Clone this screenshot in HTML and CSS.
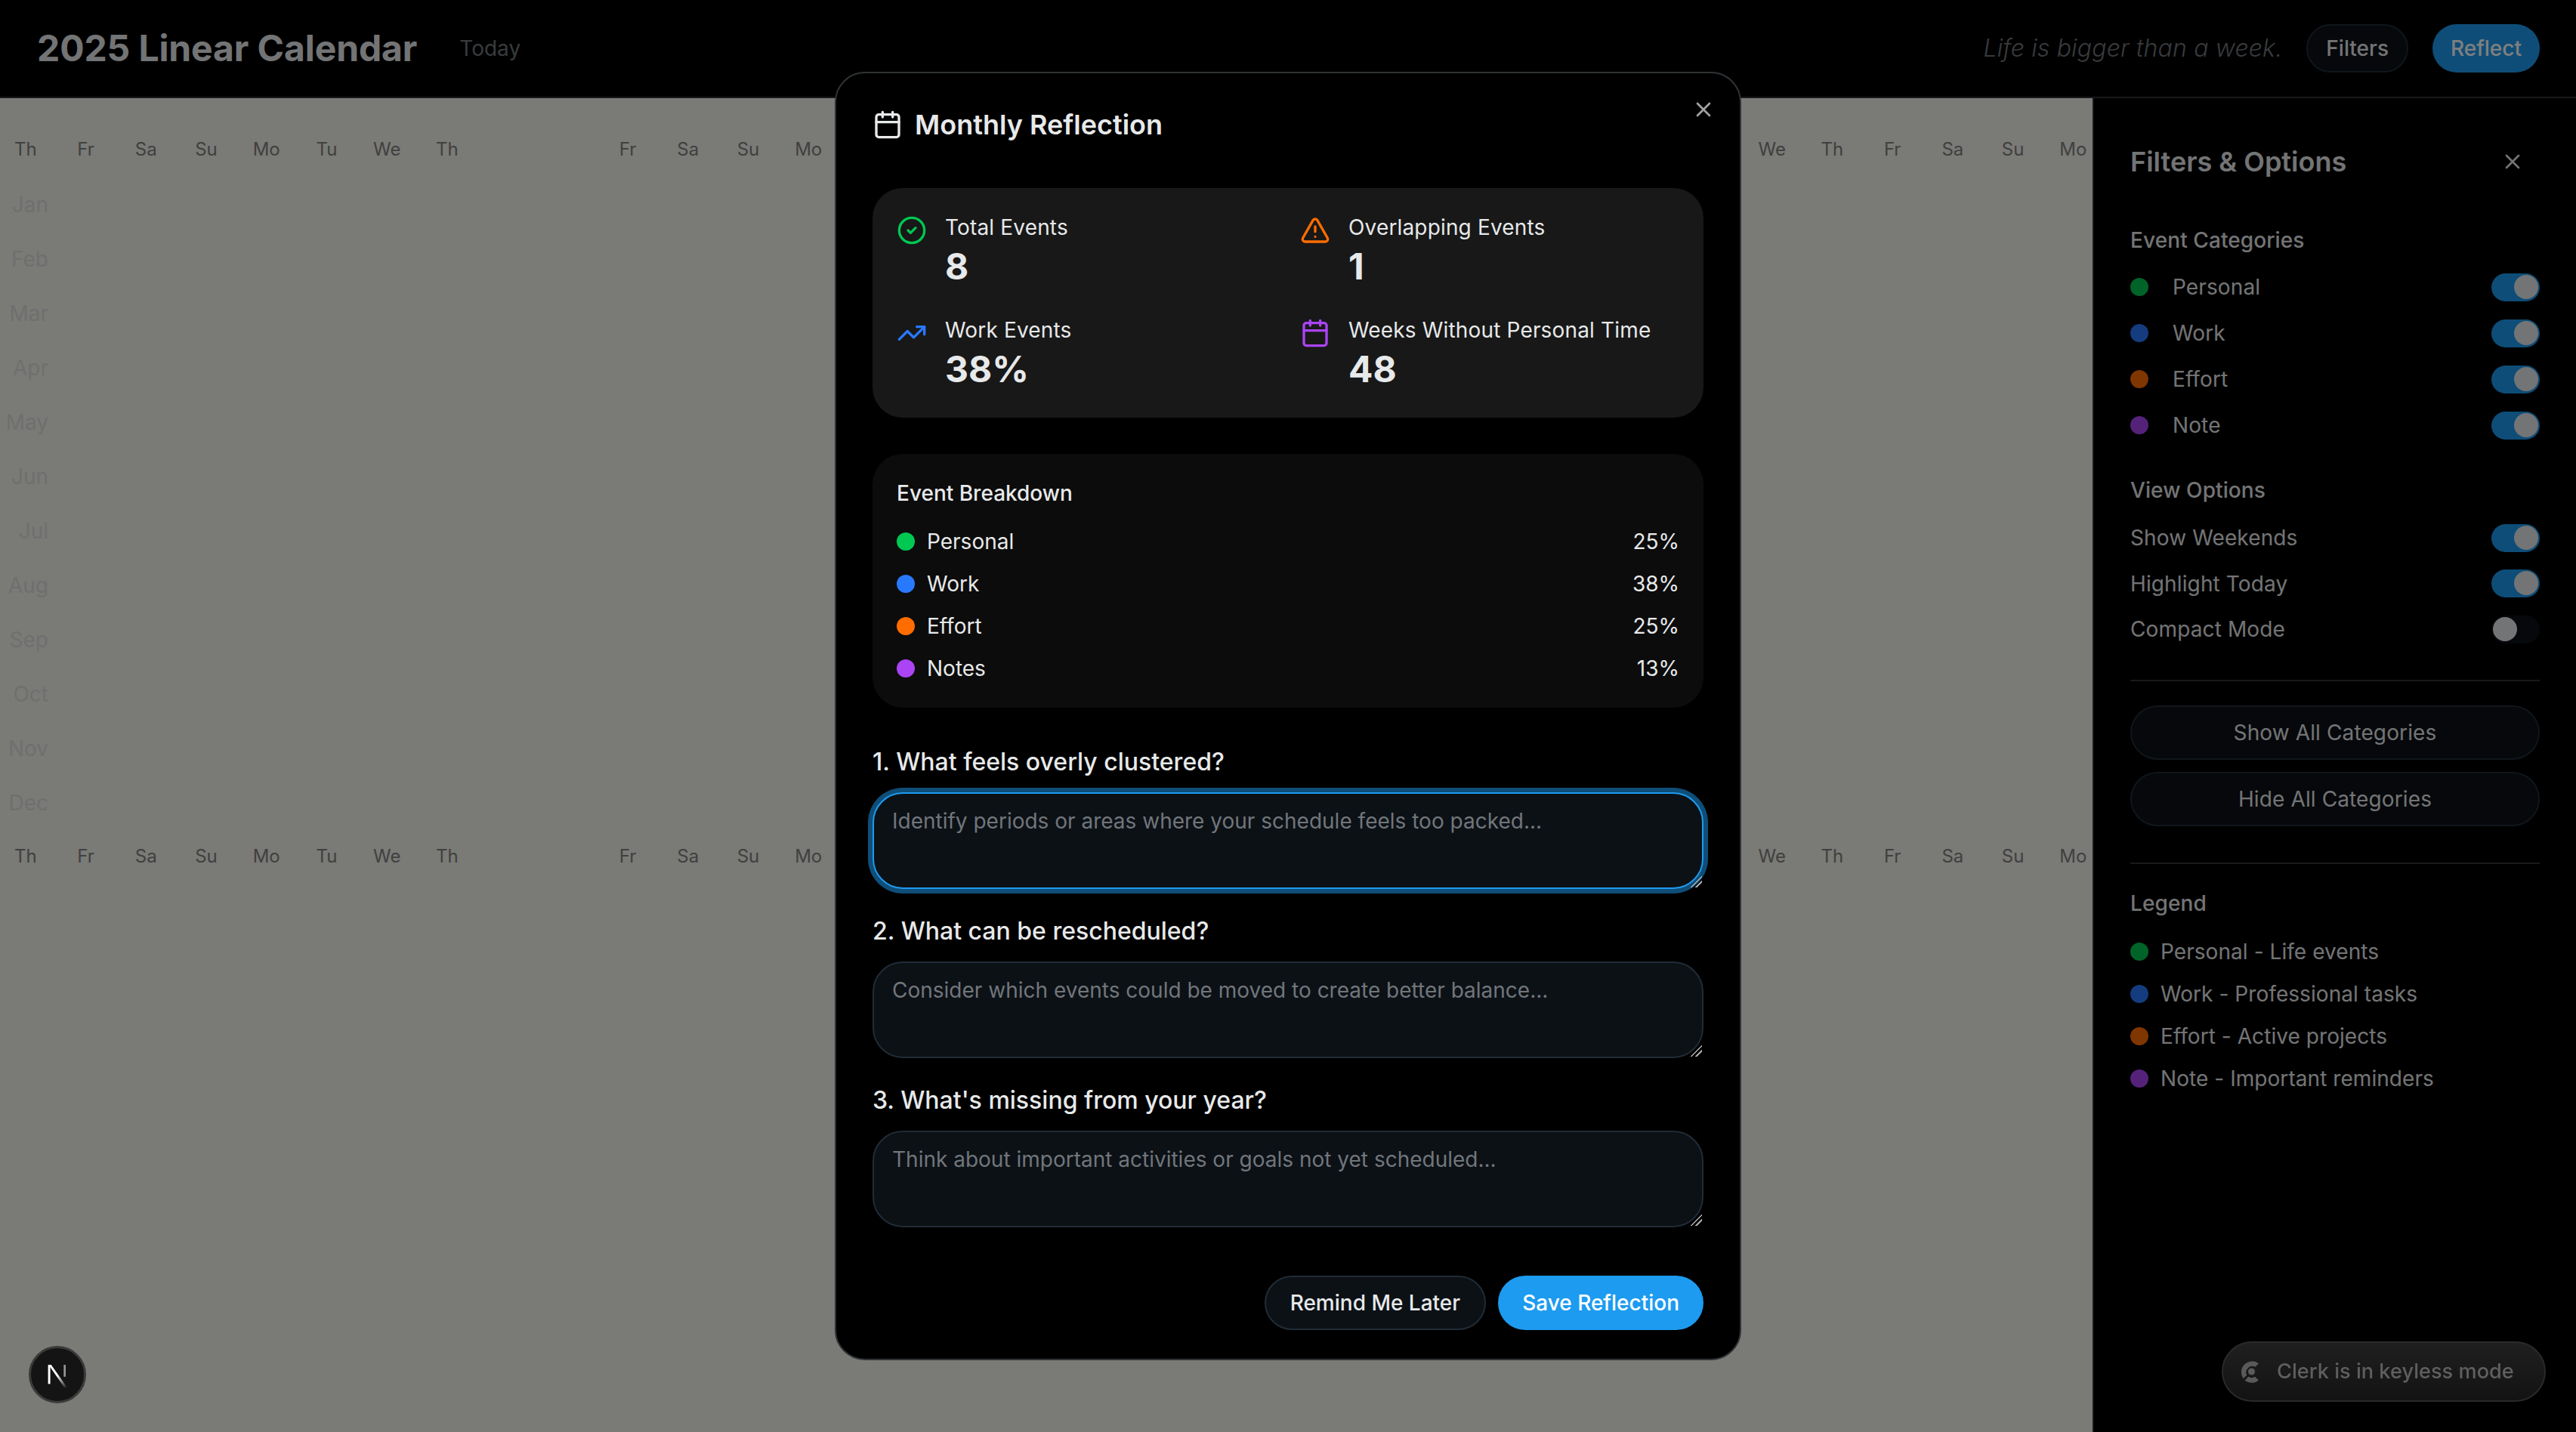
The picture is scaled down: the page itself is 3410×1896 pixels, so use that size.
FILE: index.html
```html
<!DOCTYPE html>
<html lang="en">
<head>
  <meta charset="UTF-8">
  <title>2025 Linear Calendar</title>
  <link rel="stylesheet" href="styles.css">
</head>
<body>

  <header class="topbar">
    <div class="topbar-left">
      <h1>2025 Linear Calendar</h1>
      <span class="today">Today</span>
    </div>
    <div class="topbar-right">
      <em class="tagline">Life is bigger than a week.</em>
      <button class="btn btn-outline btn-small">Filters</button>
      <button class="btn btn-primary btn-small">Reflect</button>
    </div>
  </header>

  <div class="page">
    <main class="calendar">
      <div class="days">
        <span>Th</span><span>Fr</span><span>Sa</span><span>Su</span><span>Mo</span><span>Tu</span><span>We</span><span>Th</span><span></span><span></span>
        <span>Fr</span><span>Sa</span><span>Su</span><span>Mo</span><span>Tu</span><span>We</span><span>Th</span><span>Fr</span><span>Sa</span><span>Su</span>
        <span>Mo</span><span>Tu</span><span>We</span><span>Th</span><span>Fr</span><span>Sa</span><span>Su</span><span>Mo</span><span>Tu</span><span>We</span>
        <span>Th</span><span>Fr</span><span>Sa</span><span>Su</span><span>Mo</span>
      </div>
      <div class="months">
        <div>Jan</div><div>Feb</div><div>Mar</div><div>Apr</div><div>May</div><div>Jun</div>
        <div>Jul</div><div>Aug</div><div>Sep</div><div>Oct</div><div>Nov</div><div>Dec</div>
      </div>
      <div class="days">
        <span>Th</span><span>Fr</span><span>Sa</span><span>Su</span><span>Mo</span><span>Tu</span><span>We</span><span>Th</span><span></span><span></span>
        <span>Fr</span><span>Sa</span><span>Su</span><span>Mo</span><span>Tu</span><span>We</span><span>Th</span><span>Fr</span><span>Sa</span><span>Su</span>
        <span>Mo</span><span>Tu</span><span>We</span><span>Th</span><span>Fr</span><span>Sa</span><span>Su</span><span>Mo</span><span>Tu</span><span>We</span>
        <span>Th</span><span>Fr</span><span>Sa</span><span>Su</span><span>Mo</span>
      </div>
    </main>

    <aside class="sidebar">
      <div class="sidebar-head">
        <h2>Filters &amp; Options</h2>
        <svg class="icon-close" viewBox="0 0 24 24"><path d="M18 6 6 18M6 6l12 12"/></svg>
      </div>

      <h3 class="side-title">Event Categories</h3>
      <div class="toggle-list">
        <div class="toggle-row"><span class="cat"><i class="dot green"></i>Personal</span><span class="switch on"></span></div>
        <div class="toggle-row"><span class="cat"><i class="dot blue"></i>Work</span><span class="switch on"></span></div>
        <div class="toggle-row"><span class="cat"><i class="dot orange"></i>Effort</span><span class="switch on"></span></div>
        <div class="toggle-row"><span class="cat"><i class="dot purple"></i>Note</span><span class="switch on"></span></div>
      </div>

      <h3 class="side-title view-title">View Options</h3>
      <div class="toggle-list view-list">
        <div class="toggle-row"><span>Show Weekends</span><span class="switch on"></span></div>
        <div class="toggle-row"><span>Highlight Today</span><span class="switch on"></span></div>
        <div class="toggle-row"><span>Compact Mode</span><span class="switch"></span></div>
      </div>

      <div class="side-actions">
        <button class="btn btn-outline btn-wide">Show All Categories</button>
        <button class="btn btn-outline btn-wide">Hide All Categories</button>
      </div>

      <div class="side-legend">
        <h3 class="side-title">Legend</h3>
        <div class="legend-list">
          <div class="legend-row"><i class="dot green"></i>Personal - Life events</div>
          <div class="legend-row"><i class="dot blue"></i>Work - Professional tasks</div>
          <div class="legend-row"><i class="dot orange"></i>Effort - Active projects</div>
          <div class="legend-row"><i class="dot purple"></i>Note - Important reminders</div>
        </div>
      </div>
    </aside>
  </div>

  <div class="overlay"></div>

  <div class="modal-wrap">
    <section class="modal">
      <svg class="icon-close modal-close" viewBox="0 0 24 24"><path d="M18 6 6 18M6 6l12 12"/></svg>

      <div class="modal-head">
        <svg class="icon" viewBox="0 0 24 24"><path d="M8 2v4M16 2v4"/><rect x="3" y="4" width="18" height="18" rx="2"/><path d="M3 10h18"/></svg>
        <h2>Monthly Reflection</h2>
      </div>

      <div class="stats">
        <div class="stat">
          <svg class="icon c-green" viewBox="0 0 24 24"><circle cx="12" cy="12" r="10"/><path d="m9 12 2 2 4-4"/></svg>
          <div><p class="stat-label">Total Events</p><p class="stat-value">8</p></div>
        </div>
        <div class="stat">
          <svg class="icon c-orange" viewBox="0 0 24 24"><path d="m21.73 18-8-14a2 2 0 0 0-3.48 0l-8 14A2 2 0 0 0 4 21h16a2 2 0 0 0 1.73-3"/><path d="M12 9v4M12 17h.01"/></svg>
          <div><p class="stat-label">Overlapping Events</p><p class="stat-value">1</p></div>
        </div>
        <div class="stat">
          <svg class="icon c-blue" viewBox="0 0 24 24"><path d="m22 7-8.5 8.5-5-5L2 17"/><path d="M16 7h6v6"/></svg>
          <div><p class="stat-label">Work Events</p><p class="stat-value">38%</p></div>
        </div>
        <div class="stat">
          <svg class="icon c-purple" viewBox="0 0 24 24"><path d="M8 2v4M16 2v4"/><rect x="3" y="4" width="18" height="18" rx="2"/><path d="M3 10h18"/></svg>
          <div><p class="stat-label">Weeks Without Personal Time</p><p class="stat-value">48</p></div>
        </div>
      </div>

      <div class="breakdown">
        <h3>Event Breakdown</h3>
        <div class="breakdown-row"><span class="cat-sm"><i class="dot green"></i>Personal</span><span>25%</span></div>
        <div class="breakdown-row"><span class="cat-sm"><i class="dot blue"></i>Work</span><span>38%</span></div>
        <div class="breakdown-row"><span class="cat-sm"><i class="dot orange"></i>Effort</span><span>25%</span></div>
        <div class="breakdown-row"><span class="cat-sm"><i class="dot purple"></i>Notes</span><span>13%</span></div>
      </div>

      <div class="questions">
        <label class="question">1. What feels overly clustered?
          <textarea class="focused" placeholder="Identify periods or areas where your schedule feels too packed..."></textarea>
        </label>
        <label class="question">2. What can be rescheduled?
          <textarea placeholder="Consider which events could be moved to create better balance..."></textarea>
        </label>
        <label class="question">3. What's missing from your year?
          <textarea placeholder="Think about important activities or goals not yet scheduled..."></textarea>
        </label>
      </div>

      <div class="modal-actions">
        <button class="btn btn-outline">Remind Me Later</button>
        <button class="btn btn-primary">Save Reflection</button>
      </div>
    </section>
  </div>

  <div class="next-badge">
    <svg viewBox="0 0 32 32" width="36" height="36">
      <defs>
        <linearGradient id="nfade" x1="0" y1="0" x2="1" y2="1">
          <stop offset="0.45" stop-color="#fff"/>
          <stop offset="1" stop-color="#fff" stop-opacity="0"/>
        </linearGradient>
      </defs>
      <path d="M5 27V4.5h2.6V27z" fill="#fff"/>
      <path d="M5.6 4.5h3L27.5 31h-3.4z" fill="url(#nfade)"/>
      <path d="M23.4 4.5h2.4v14h-2.4z" fill="#fff" opacity=".55"/>
    </svg>
  </div>

  <div class="clerk-pill">
    <svg viewBox="0 0 26 32" width="26" height="32">
      <path d="M25 5.2A14.5 14.5 0 0 0 4.6 25.3l4.6-4.6A8.2 8.2 0 0 1 20.4 9.8z" fill="#5a5a5a"/>
      <circle cx="15.5" cy="16" r="4.6" fill="#5a5a5a"/>
      <path d="M6.6 27.8a14.5 14.5 0 0 0 18.2-.4l-4.6-4.6a8.2 8.2 0 0 1-9 0z" fill="#5a5a5a"/>
    </svg>
    <span>Clerk is in keyless mode</span>
  </div>

</body>
</html>
```

FILE: styles.css
```css
* {
  box-sizing: border-box;
}

html, body {
  margin: 0;
  height: 100%;
  overflow: hidden;
}

body {
  background: #f5f5ee;
  font-family: Inter, "Liberation Sans", sans-serif;
  font-size: 28px;
  line-height: 40px;
  color: #e7e9ea;
  display: flex;
  flex-direction: column;
}

h1, h2, h3, p {
  margin: 0;
}

/* top bar */
.topbar {
  height: 130px;
  flex: none;
  background: #000;
  border-bottom: 2px solid #2f3336;
  display: flex;
  align-items: center;
  justify-content: space-between;
  padding: 0 48px 0 49px;
}

.topbar-left, .topbar-right {
  display: flex;
  align-items: center;
}

.topbar-left h1 {
  font-size: 48px;
  line-height: 64px;
  font-weight: 700;
  letter-spacing: -0.1px;
}

.today {
  margin-left: 56px;
  color: #71767b;
}

.tagline {
  font-size: 32px;
  font-weight: 300;
  letter-spacing: 0.16px;
  color: #71767b;
  margin-right: 32px;
}

.topbar-right .btn-outline {
  margin-right: 32px;
}

/* buttons */
.btn {
  font: inherit;
  font-weight: 500;
  height: 72px;
  padding: 0 32px;
  border-radius: 36px;
  color: #e7e9ea;
  border: 2px solid transparent;
}

.btn-small {
  height: 64px;
  padding: 0 24px;
  border-radius: 32px;
}

.btn-primary {
  background: #1d9bf0;
  color: #fff;
  border: 0;
}

.btn-outline {
  background: #0c1116;
  border-color: #202c36;
}

.btn-wide {
  width: 100%;
  font-weight: 400;
  letter-spacing: 0.12px;
}

/* calendar behind the dialog */
.page {
  flex: 1;
  display: flex;
  min-height: 0;
}

.calendar {
  flex: 1;
  min-width: 0;
  overflow: hidden;
  padding-top: 52px;
}

.days {
  display: grid;
  grid-template-columns: repeat(35, 79.73px);
  margin-left: -6px;
  font-size: 24px;
  line-height: 32px;
  color: #808080;
  text-align: center;
}

.months {
  margin: 21px 0 19px;
  width: 64px;
  text-align: right;
  color: #dedfdf;
}

.months div {
  height: 72px;
  line-height: 72px;
}

/* filter sidebar */
.sidebar {
  width: 640px;
  flex: none;
  background: #000;
  border-left: 2px solid #2f3336;
  padding: 48px 48px 0;
}

.sidebar-head {
  height: 72px;
  display: flex;
  align-items: center;
  justify-content: space-between;
  padding-right: 20px;
  margin-bottom: 48px;
}

.sidebar-head h2 {
  font-size: 36px;
  font-weight: 600;
}

.side-title {
  font-size: 28px;
  font-weight: 450;
  letter-spacing: 0.1px;
}

.toggle-list {
  display: flex;
  flex-direction: column;
  gap: 21px;
  margin-top: 22px;
}

.toggle-row {
  display: flex;
  align-items: center;
  justify-content: space-between;
  letter-spacing: 0.12px;
}

.cat {
  display: flex;
  align-items: center;
  gap: 32px;
}

.view-title {
  margin-top: 46px;
}

.view-list {
  gap: 20.5px;
  margin-top: 23px;
}

.switch {
  width: 64px;
  height: 37px;
  border-radius: 19px;
  background: #0c1116;
  border: 2px solid transparent;
  display: flex;
  justify-content: flex-start;
}

.switch::after {
  content: "";
  width: 32px;
  height: 32px;
  border-radius: 50%;
  background: #e7e9ea;
}

.switch.on {
  background: #1d9bf0;
  justify-content: flex-end;
}

.side-actions {
  margin-top: 47px;
  padding: 32px 0 48px;
  border-top: 2px solid #2f3336;
  border-bottom: 2px solid #2f3336;
  display: flex;
  flex-direction: column;
  gap: 16px;
}

.side-legend {
  padding-top: 32px;
}

.legend-list {
  display: flex;
  flex-direction: column;
  gap: 16px;
  margin-top: 24px;
}

.legend-row {
  display: flex;
  align-items: center;
  gap: 16px;
  letter-spacing: 0.06px;
}

.dot {
  width: 24px;
  height: 24px;
  border-radius: 50%;
  flex: none;
}

.green { background: #00c853; }
.blue { background: #2979ff; }
.orange { background: #ff6d00; }
.purple { background: #aa44f5; }

/* dimmed backdrop */
.overlay {
  position: fixed;
  inset: 0;
  background: rgba(0, 0, 0, 0.5);
}

.modal-wrap {
  position: fixed;
  inset: 0;
  display: flex;
  align-items: center;
  justify-content: center;
}

.modal {
  position: relative;
  width: 1200px;
  background: #000;
  border: 2px solid #2f3336;
  border-radius: 40px;
  padding: 40px 48px 38px;
}

.icon, .icon-close {
  fill: none;
  stroke: currentColor;
  stroke-linecap: round;
  stroke-linejoin: round;
  flex: none;
}

.icon {
  width: 40px;
  height: 40px;
  stroke-width: 2;
}

.icon-close {
  width: 32px;
  height: 32px;
  stroke-width: 2;
}

.modal-close {
  position: absolute;
  top: 32px;
  right: 32px;
  opacity: 0.7;
}

.modal-head {
  display: flex;
  align-items: center;
  gap: 16px;
  height: 56px;
  margin-bottom: 56px;
}

.modal-head h2 {
  font-size: 36px;
  line-height: 56px;
  font-weight: 600;
}

.stats {
  background: #181818;
  border-radius: 40px;
  padding: 32px;
  display: grid;
  grid-template-columns: 1fr 1fr;
  gap: 32px;
}

.stat {
  display: flex;
  gap: 24px;
}

.stat .icon {
  margin-top: 4px;
}

.stat-label {
  letter-spacing: 0.16px;
}

.stat-value {
  font-size: 48px;
  line-height: 64px;
  font-weight: 700;
}

.c-green { color: #00c853; }
.c-orange { color: #ff6d00; }
.c-blue { color: #2979ff; }
.c-purple { color: #aa44f5; }

.breakdown {
  margin-top: 48px;
  background: #0c0c0c;
  border-radius: 40px;
  padding: 32px;
  display: flex;
  flex-direction: column;
  gap: 16px;
}

.breakdown h3 {
  font-size: 28px;
  font-weight: 500;
  margin-bottom: 8px;
}

.breakdown-row {
  display: flex;
  justify-content: space-between;
}

.cat-sm {
  display: flex;
  align-items: center;
  gap: 16px;
}

.questions {
  margin-top: 48px;
  display: flex;
  flex-direction: column;
  gap: 32px;
}

.question {
  display: block;
  font-size: 32px;
  line-height: 48px;
  font-weight: 500;
}

.question textarea {
  display: block;
  width: 100%;
  height: 128px;
  margin-top: 16px;
  padding: 16px 24px;
  font-family: inherit;
  font-size: 28px;
  line-height: 40px;
  color: #e7e9ea;
  background: #0c1116;
  border: 2px solid #202c36;
  border-radius: 40px;
  outline: none;
  resize: vertical;
}

.question textarea::-webkit-resizer {
  background: linear-gradient(135deg, transparent 48%, #aaa 48%, #aaa 56%, transparent 56%, transparent 70%, #aaa 70%, #aaa 78%, transparent 78%);
}

.question textarea::placeholder {
  color: #71767b;
}

.question textarea.focused {
  border-color: #1d9bf0;
  box-shadow: 0 0 0 6px rgba(29, 155, 240, 0.5);
}

.modal-actions {
  margin-top: 64px;
  display: flex;
  justify-content: flex-end;
  gap: 16px;
}

/* floating dev widgets */
.next-badge {
  position: fixed;
  left: 38px;
  top: 1782px;
  width: 76px;
  height: 76px;
  border-radius: 50%;
  background: #141414;
  border: 3px solid #3a3a3a;
  display: flex;
  align-items: center;
  justify-content: center;
}

.clerk-pill {
  position: fixed;
  left: 2941px;
  top: 1776px;
  width: 429px;
  height: 80px;
  border-radius: 40px;
  border: 2px solid #2a2a2a;
  background: linear-gradient(#1f1f1f, #131313);
  color: #5f5f5f;
  font-size: 27.2px;
  font-weight: 500;
  display: flex;
  align-items: center;
  gap: 23px;
  padding-left: 22px;
}
```
